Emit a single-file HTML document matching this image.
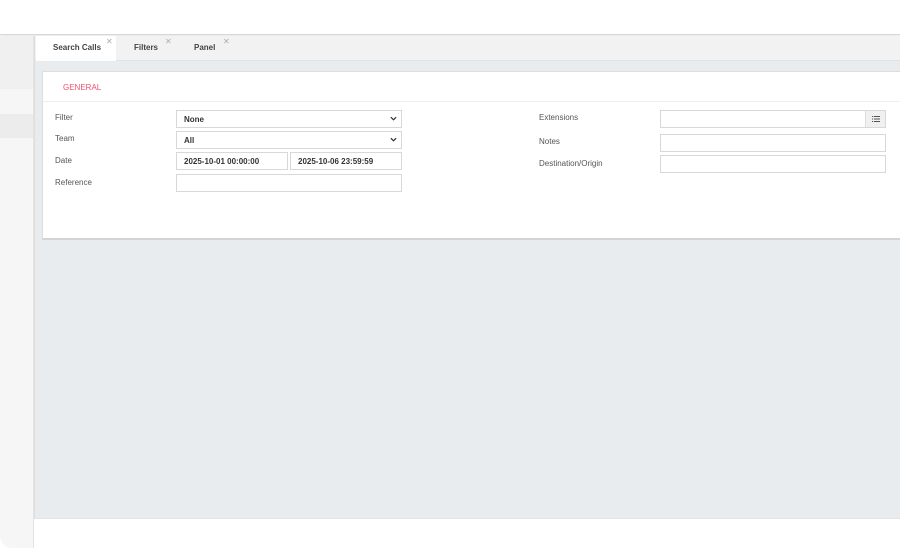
<!DOCTYPE html>
<html><head><style>
*{box-sizing:border-box;margin:0;padding:0}
body{width:900px;height:550px;overflow:hidden;background:#fff;font-family:"Liberation Sans",sans-serif;position:relative;font-size:8px;color:#444}
.top{position:absolute;left:0;top:0;width:900px;height:35px;background:#fff;border-bottom:1px solid #d8d8d8;box-shadow:0 1px 3px rgba(0,0,0,.12)}
.side{position:absolute;left:0;top:36px;width:34px;height:512px;background:#f6f6f6;border-bottom-left-radius:12px;border-right:1px solid #e4e4e4}
.main{position:absolute;left:34px;top:36px;width:866px;height:483px;background:#e9ecef;border-left:1px solid #ddd;border-bottom:1px solid #e2e4e6}
.tabs{position:absolute;left:0;top:0;width:866px;height:25px;background:#f2f2f2;border-bottom:1px solid #e2e2e2}
.tab{position:absolute;top:0;height:25px;font-size:8px;font-weight:bold;color:#444;padding-top:7px}
.x{position:absolute;top:1px;color:#aaa;font-size:8px;font-weight:normal}
.card{position:absolute;left:7px;top:35px;width:860px;height:169px;background:#fff;border:1px solid #dedede;border-bottom:2px solid #d4d4d4}
.gen{position:absolute;left:20px;top:11px;color:#f0506e;font-size:8px}
.hl{position:absolute;left:0;top:29px;width:858px;border-top:1px solid #eee}
.lbl{position:absolute;font-size:8px;color:#555}
.in{position:absolute;height:18px;border:1px solid #d8d8d8;background:#fff;font-size:8px;font-weight:bold;color:#333;padding:4px 7px}
.chev{position:absolute;right:4px;top:4px}
</style></head><body>
<div class="top"></div>
<div class="side">
<div style="position:absolute;left:0;top:0;width:33px;height:53px;background:#f0f0f0"></div>
<div style="position:absolute;left:0;top:78px;width:33px;height:24px;background:#ececec"></div>
</div>
<div class="main">
<div class="tabs">
<div class="tab" style="left:1px;width:80px;background:#fff;padding-left:17px">Search Calls</div>
<span class="x" style="left:71px">✕</span>
<div class="tab" style="left:99px">Filters</div><span class="x" style="left:130px">✕</span>
<div class="tab" style="left:159px">Panel</div><span class="x" style="left:188px">✕</span>
</div>
<div class="card">
<div class="gen">GENERAL</div>
<div class="hl"></div>
<div class="lbl" style="left:12px;top:41px">Filter</div>
<div class="lbl" style="left:12px;top:62px">Team</div>
<div class="lbl" style="left:12px;top:84px">Date</div>
<div class="lbl" style="left:12px;top:106px">Reference</div>
<div class="in" style="left:133px;top:38px;width:226px">None<svg class="chev" width="7" height="7" viewBox="0 0 8 8"><path d="M1 2.5L4 5.5L7 2.5" stroke="#333" stroke-width="1.4" fill="none"/></svg></div>
<div class="in" style="left:133px;top:59px;width:226px">All<svg class="chev" width="7" height="7" viewBox="0 0 8 8"><path d="M1 2.5L4 5.5L7 2.5" stroke="#333" stroke-width="1.4" fill="none"/></svg></div>
<div class="in" style="left:133px;top:80px;width:112px">2025-10-01 00:00:00</div>
<div class="in" style="left:247px;top:80px;width:112px">2025-10-06 23:59:59</div>
<div class="in" style="left:133px;top:102px;width:226px"></div>
<div class="lbl" style="left:496px;top:41px">Extensions</div>
<div class="lbl" style="left:496px;top:65px">Notes</div>
<div class="lbl" style="left:496px;top:87px">Destination/Origin</div>
<div class="in" style="left:617px;top:38px;width:226px;padding:0"><div style="position:absolute;right:0;top:0;width:20px;height:16px;background:#f0f0f0;border-left:1px solid #ddd"><svg style="position:absolute;left:6px;top:4px" width="8" height="8" viewBox="0 0 8 8"><g fill="#555"><rect x="0" y="1" width="1.2" height="1"/><rect x="2" y="1" width="6" height="1"/><rect x="0" y="3.5" width="1.2" height="1"/><rect x="2" y="3.5" width="6" height="1"/><rect x="0" y="6" width="1.2" height="1"/><rect x="2" y="6" width="6" height="1"/></g></svg></div></div>
<div class="in" style="left:617px;top:62px;width:226px"></div>
<div class="in" style="left:617px;top:83px;width:226px"></div>
</div>
</div>
</body></html>
